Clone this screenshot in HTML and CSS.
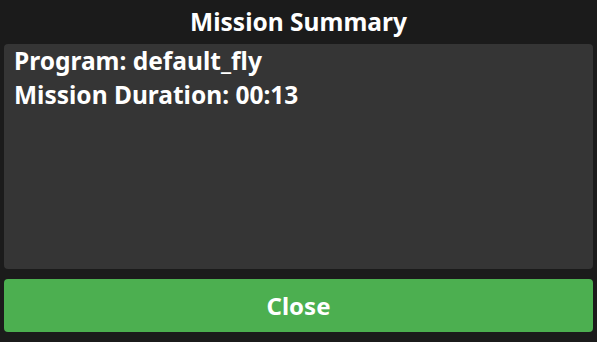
FILE: index.html
```html
<!DOCTYPE html>
<html lang="en">
  <head>
    <meta charset="UTF-8" />
    <meta name="viewport" content="width=device-width, initial-scale=1.0" />
    <title>Mission Summary</title>
    <link rel="stylesheet" href="styles.css">
  </head>
  <body>
    <div class="dialog">
      <div class="dialog-title">Mission Summary</div>
      <div class="summary">
        <div class="summary-line">Program: default_fly</div>
        <div class="summary-line">Mission Duration: 00:13</div>
      </div>
      <button class="close-btn">Close</button>
    </div>
  </body>
</html>
```

FILE: styles.css
```css
html,
body {
  margin: 0;
  padding: 0;
  height: 100%;
  background-color: #1b1b1b;
  font-family: "Noto Sans", "Open Sans", sans-serif;
  font-weight: bold;
  color: #fff;
}

.dialog {
  display: flex;
  flex-direction: column;
  height: 100%;
  box-sizing: border-box;
  padding: 0 4px 10px;
}

.dialog-title {
  height: 44px;
  line-height: 44px;
  text-align: center;
  font-size: 24.5px;
}

.summary {
  flex: 1;
  background-color: #353535;
  border-radius: 4px;
  padding: 0 10px;
  font-size: 24.5px;
  line-height: 34px;
}

.close-btn {
  margin-top: 10px;
  height: 53px;
  border: none;
  border-radius: 4px;
  background-color: #4caf50;
  color: #fff;
  font-family: inherit;
  font-weight: bold;
  font-size: 24px;
}
```
